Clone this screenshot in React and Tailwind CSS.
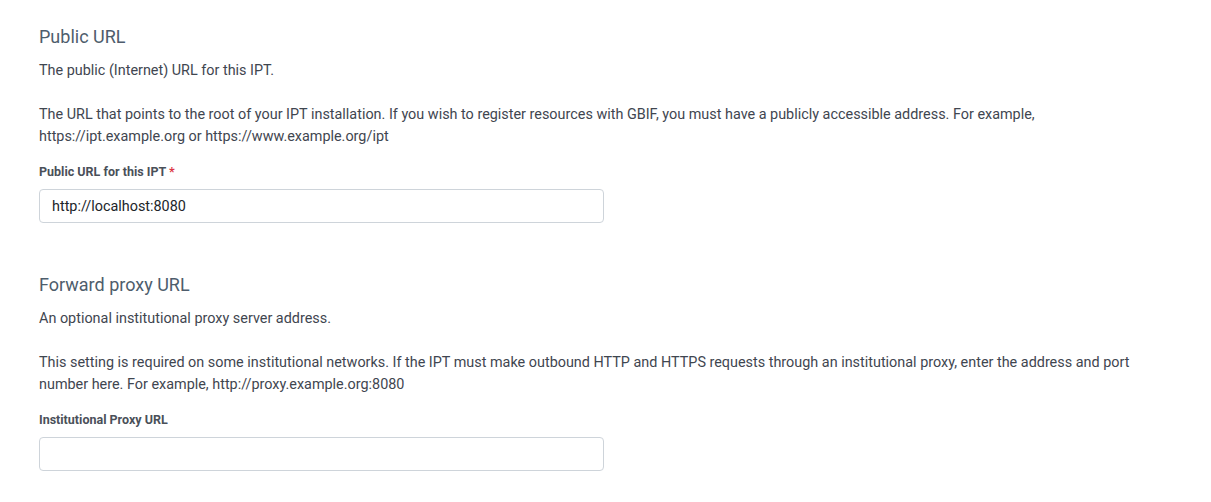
export default function App() {
  const Section = ({ title, lead, body, label, required, value }) => (
    <div className="flex flex-col">
      <h5 className="text-[18px] leading-[22px] text-[#4e5d6c] font-normal">{title}</h5>
      <p className="mt-[12px] text-[14.4px] leading-[22px] text-[#3f4650]">{lead}</p>
      <p className="mt-[22px] text-[14.4px] leading-[22px] text-[#3f4650]">{body}</p>
      <label className="mt-[15px] text-[12.5px] leading-[18px] font-bold text-[#4a5059]">
        {label}
        {required && <span className="text-[#dc3545]"> *</span>}
      </label>
      <input
        readOnly
        value={value}
        className="mt-[8px] w-[565px] h-[34px] px-[12px] border border-[#ced4da] rounded-[4px] text-[14.4px] text-[#212529] outline-none"
      />
    </div>
  );
  return (
    <div className="w-[1211px] h-[502px] bg-white pl-[39px] pr-[60px] pt-[26px]" style={{ fontFamily: "Roboto, 'Liberation Sans', sans-serif" }}>
      <Section
        title="Public URL"
        lead="The public (Internet) URL for this IPT."
        body="The URL that points to the root of your IPT installation. If you wish to register resources with GBIF, you must have a publicly accessible address. For example, https://ipt.example.org or https://www.example.org/ipt"
        label="Public URL for this IPT"
        required
        value="http://localhost:8080"
      />
      <div className="mt-[51px]">
        <Section
          title="Forward proxy URL"
          lead="An optional institutional proxy server address."
          body="This setting is required on some institutional networks. If the IPT must make outbound HTTP and HTTPS requests through an institutional proxy, enter the address and port number here. For example, http://proxy.example.org:8080"
          label="Institutional Proxy URL"
          value=""
        />
      </div>
    </div>
  );
}
